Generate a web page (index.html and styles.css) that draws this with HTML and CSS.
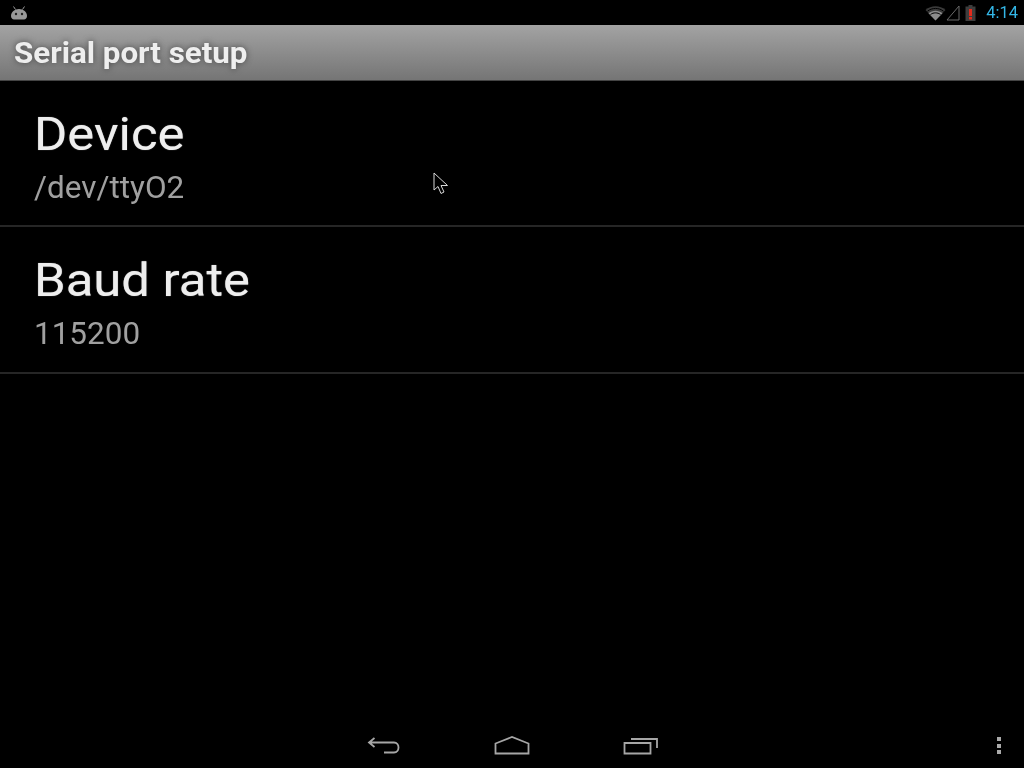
FILE: index.html
```html
<!DOCTYPE html>
<html lang="en">
<head>
    <meta charset="UTF-8">
    <title>Serial port setup</title>
    <link rel="stylesheet" href="styles.css">
</head>
<body>
<div class="screen">
    <div class="status-bar">
        <svg class="debug-icon" width="18" height="14" viewBox="0 0 18 14">
            <path d="M3.500 0.500l2 3M14.500 0.500l-2 3" stroke="#999" stroke-width="1" fill="none"/>
            <path d="M1 10c0-4 3.500-7 8-7s8 3 8 7c0 2-1.500 3.500-3 3.500H4c-1.500 0-3-1.500-3-3.500z" fill="#999"/>
            <circle cx="6" cy="8" r="1.200" fill="#222"/>
            <circle cx="12" cy="8" r="1.200" fill="#222"/>
        </svg>
        <div class="status-right">
            <svg width="21" height="16" viewBox="0 0 21 16">
                <path d="M10.500 15.500L0.500 5C6 0 15 0 20.500 5z" fill="#3a3a3a"/>
                <path d="M10.500 15.500L3.500 8.200C7.500 4.800 13.500 4.800 17.500 8.200z" fill="#8c8c8c"/>
                <path d="M2.500 6.200C7 2.500 14 2.500 18.500 6.200" stroke="#000" stroke-width="1" fill="none"/>
                <path d="M5.500 9.500C8.500 7.300 12.500 7.300 15.500 9.500" stroke="#000" stroke-width="1" fill="none"/>
            </svg>
            <svg class="signal-icon" width="14" height="16" viewBox="0 0 14 16">
                <path d="M13 1V15H1z" stroke="#6a6a6a" stroke-width="1" fill="none"/>
            </svg>
            <svg class="battery-icon" width="11" height="16" viewBox="0 0 11 16">
                <path d="M3.500 0h4v1.500h3V16H0.500V1.500h3z" fill="#3d3d3d"/>
                <rect x="4" y="4" width="3" height="7" fill="#e02b1c"/>
                <rect x="4" y="12" width="3" height="2.500" fill="#e02b1c"/>
            </svg>
            <span class="clock">4:14</span>
        </div>
    </div>
    <div class="action-bar">
        <h1>Serial port setup</h1>
    </div>
    <ul class="pref-list">
        <li>
            <div class="pref-title">Device</div>
            <div class="pref-summary">/dev/ttyO2</div>
        </li>
        <li>
            <div class="pref-title">Baud rate</div>
            <div class="pref-summary">115200</div>
        </li>
    </ul>
    <div class="nav-bar">
        <div class="nav-buttons">
            <svg width="34" height="20" viewBox="0 0 34 20">
                <path d="M7.500 2L2 6.500l5.500 4.500M2 6.500h25c6 0 6 10 0 10H17" stroke="#a6a6a6" stroke-width="1.800" fill="none"/>
            </svg>
            <svg width="36" height="20" viewBox="0 0 36 20">
                <path d="M1.500 17.500V7.500L18 1l16.500 6.500v10z" stroke="#a6a6a6" stroke-width="1.800" fill="none"/>
            </svg>
            <svg width="36" height="20" viewBox="0 0 36 20">
                <path d="M1.500 7h26v10.500h-26z" stroke="#a6a6a6" stroke-width="1.800" fill="none"/>
                <path d="M8 3h26v9" stroke="#a6a6a6" stroke-width="1.800" fill="none"/>
            </svg>
        </div>
        <div class="menu-dots"><span></span><span></span><span></span></div>
    </div>
    <svg class="pointer" width="16" height="24" viewBox="0 0 16 24">
        <path d="M1 1V18L5 14.500L8 21.500L11 20L8 13.500H14.500z" fill="#000" stroke="#d8d8d8" stroke-width="1"/>
    </svg>
</div>
</body>
</html>
```

FILE: styles.css
```css
body {
    margin: 0;
    background-color: #000;
    font-family: Roboto, sans-serif;
}

.screen {
    position: relative;
    width: 1024px;
    height: 768px;
    display: flex;
    flex-direction: column;
    overflow: hidden;
    background-color: #000;
    filter: blur(0.5px);
}

.status-bar {
    height: 25px;
    display: flex;
    align-items: center;
    justify-content: space-between;
    padding: 0 6px 0 10px;
    box-sizing: border-box;
}

.status-right {
    display: flex;
    align-items: center;
}

.signal-icon {
    margin-right: 5px;
}

.clock {
    margin-left: 10px;
    font-size: 16.500px;
    color: #33b5e5;
}

.action-bar {
    height: 56px;
    box-sizing: border-box;
    display: flex;
    align-items: center;
    padding-left: 14px;
    background: linear-gradient(#a3a3a3, #757575);
    border-bottom: 1px solid #444;
}

.action-bar h1 {
    margin: 0;
    font-size: 29px;
    font-weight: 700;
    color: #eee;
    text-shadow: 0 0 6px #444;
    transform: scaleX(1.08);
    transform-origin: left;
}

.pref-list {
    list-style: none;
    margin: 0;
    padding: 0;
}

.pref-list li {
    height: 147px;
    box-sizing: border-box;
    padding: 25px 0 0 34px;
    border-bottom: 2px solid #262626;
}

.pref-list li:first-child {
    height: 146px;
}

.pref-title {
    font-size: 46px;
    line-height: 56px;
    color: #eee;
    text-shadow: 0 0 1px #999;
    transform: scaleX(1.105);
    transform-origin: left;
}

.pref-summary {
    margin-top: 6px;
    font-size: 31px;
    line-height: 40px;
    color: #a0a0a0;
    transform: scaleX(1.015);
    transform-origin: left;
}

.nav-bar {
    margin-top: auto;
    height: 44px;
    position: relative;
    display: flex;
    align-items: center;
    justify-content: center;
}

.nav-buttons {
    display: flex;
    align-items: center;
    gap: 93px;
    margin-left: 2px;
}

.menu-dots {
    position: absolute;
    right: 23px;
    top: 13px;
    display: flex;
    flex-direction: column;
    gap: 2.500px;
}

.menu-dots span {
    width: 4px;
    height: 4px;
    background-color: #aaa;
}

.pointer {
    position: absolute;
    left: 433px;
    top: 172px;
}
```
